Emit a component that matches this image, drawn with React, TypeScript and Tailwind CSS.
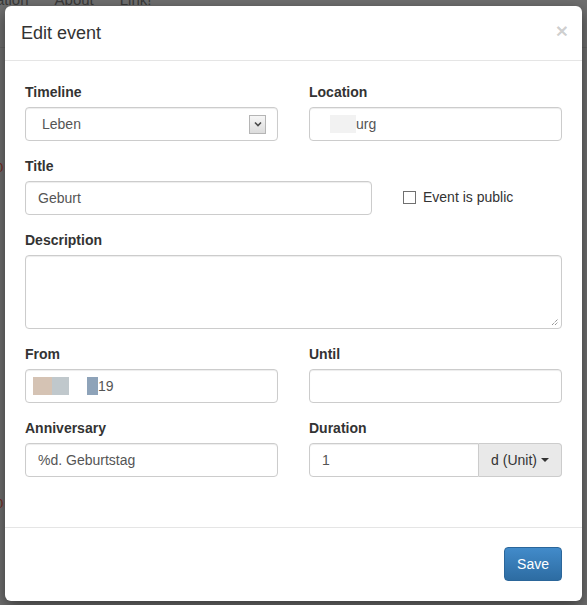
import React from "react";

const FONT = { fontFamily: '"Liberation Sans", Arial, Helvetica, sans-serif' };

const inputCls =
  "h-[34px] w-full rounded-[4px] border border-[#ccc] bg-white px-3 text-[14px] text-[#555] shadow-[inset_0_1px_1px_rgba(0,0,0,0.075)] outline-none";

function Label({ children }: { children: React.ReactNode }) {
  return <label className="mb-[5px] block text-[14px] font-bold leading-5 text-[#333]">{children}</label>;
}

function Field({ label, children }: { label: string; children: React.ReactNode }) {
  return (
    <div>
      <Label>{label}</Label>
      {children}
    </div>
  );
}

function FakeSelect({ value }: { value: string }) {
  return (
    <div className="flex h-[34px] items-center justify-between rounded-[4px] border border-[#ccc] bg-white pl-4 pr-[11px] text-[14px] text-[#555] shadow-[inset_0_1px_1px_rgba(0,0,0,0.075)]">
      <span>{value}</span>
      <span className="flex h-[19px] w-[17px] items-center justify-center border border-[#b5b5b5] bg-gradient-to-b from-[#f6f6f6] to-[#dcdcdc]">
        <svg width="8" height="6" viewBox="0 0 8 6">
          <path d="M1 1.5 L4 4.5 L7 1.5" fill="none" stroke="#4a4a4a" strokeWidth="1.6" />
        </svg>
      </span>
    </div>
  );
}

export default function App() {
  return (
    <div className="relative h-[605px] w-[587px] overflow-hidden bg-[#707070]" style={FONT}>
      {/* page behind the backdrop */}
      <div className="-mt-[8px] flex gap-[26px] text-[15px] leading-[15px] text-[#3a3a3a]">
        <span className="-ml-[4px]">ation</span>
        <span>About</span>
        <span>Link!</span>
      </div>
      <div className="mt-[40px] border-b border-[#666]" />
      <div className="-ml-[4px] mt-[112px] text-[13px] leading-4 text-[#7a2a20]">0</div>
      <div className="-ml-[4px] mt-[320px] text-[13px] leading-4 text-[#7a2a20]">0</div>

      {/* modal */}
      <div className="absolute left-[5px] top-[6px] w-[577px] rounded-[6px] bg-white shadow-[0_5px_15px_rgba(0,0,0,0.5)]">
        <div className="flex items-center justify-between border-b border-[#e5e5e5] py-[15px] pl-4 pr-[14px]">
          <h4 className="text-[18px] leading-[24px] text-[#333]">Edit event</h4>
          <span className="-mt-[6px] text-[21px] font-bold leading-none text-black/20">×</span>
        </div>

        <div className="flex flex-col gap-[15px] px-5 pb-[50px] pt-[21px]">
          <div className="grid grid-cols-2 gap-x-[31px]">
            <Field label="Timeline">
              <FakeSelect value="Leben" />
            </Field>
            <Field label="Location">
              <div className={inputCls + " flex items-center pl-[20px]"}>
                <span className="h-[18px] w-[26px] bg-[#f2f2f2]" />
                <span>urg</span>
              </div>
            </Field>
          </div>

          <div className="grid grid-cols-[347px_1fr] gap-x-[31px]">
            <Field label="Title">
              <input className={inputCls} defaultValue="Geburt" />
            </Field>
            <div className="mt-[24px] flex h-[34px] items-center gap-[7px] text-[14px] text-[#333]">
              <span className="h-[13px] w-[13px] border border-[#707070] bg-white" />
              <span>Event is public</span>
            </div>
          </div>

          <Field label="Description">
            <div className="relative h-[74px] rounded-[4px] border border-[#ccc] bg-white shadow-[inset_0_1px_1px_rgba(0,0,0,0.075)]">
              <svg className="absolute bottom-[2px] right-[2px]" width="8" height="8" viewBox="0 0 8 8">
                <path d="M1 7 L7 1 M4 7 L7 4" stroke="#666" strokeWidth="1" strokeDasharray="1 1" />
              </svg>
            </div>
          </Field>

          <div className="grid grid-cols-2 gap-x-[31px]">
            <Field label="From">
              <div className={inputCls + " flex items-center pl-[7px]"}>
                <span className="h-[18px] w-[19px] bg-[#d5c3b4]" />
                <span className="h-[18px] w-[17px] bg-[#c0c8cc]" />
                <span className="ml-[18px] h-[18px] w-[11px] bg-[#8ea3b9]" />
                <span>19</span>
              </div>
            </Field>
            <Field label="Until">
              <input className={inputCls} />
            </Field>
          </div>

          <div className="grid grid-cols-2 gap-x-[31px]">
            <Field label="Anniversary">
              <input className={inputCls} defaultValue="%d. Geburtstag" />
            </Field>
            <Field label="Duration">
              <div className="flex">
                <input className={inputCls + " rounded-r-none"} defaultValue="1" />
                <button className="flex h-[34px] w-[83px] shrink-0 items-center justify-center gap-[4px] rounded-r-[4px] border border-l-0 border-[#ccc] bg-[#e9e9e9] text-[14px] text-[#333]">
                  d (Unit)
                  <svg width="8" height="4" viewBox="0 0 8 4">
                    <path d="M0 0 L8 0 L4 4 Z" fill="#333" />
                  </svg>
                </button>
              </div>
            </Field>
          </div>
        </div>

        <div className="flex justify-end border-t border-[#e5e5e5] pb-[20px] pr-5 pt-[19px]">
          <button className="h-[34px] rounded-[4px] border border-[#2b669a] bg-gradient-to-b from-[#428bca] to-[#2d6ca2] px-3 text-[14px] text-white">
            Save
          </button>
        </div>
      </div>
    </div>
  );
}
